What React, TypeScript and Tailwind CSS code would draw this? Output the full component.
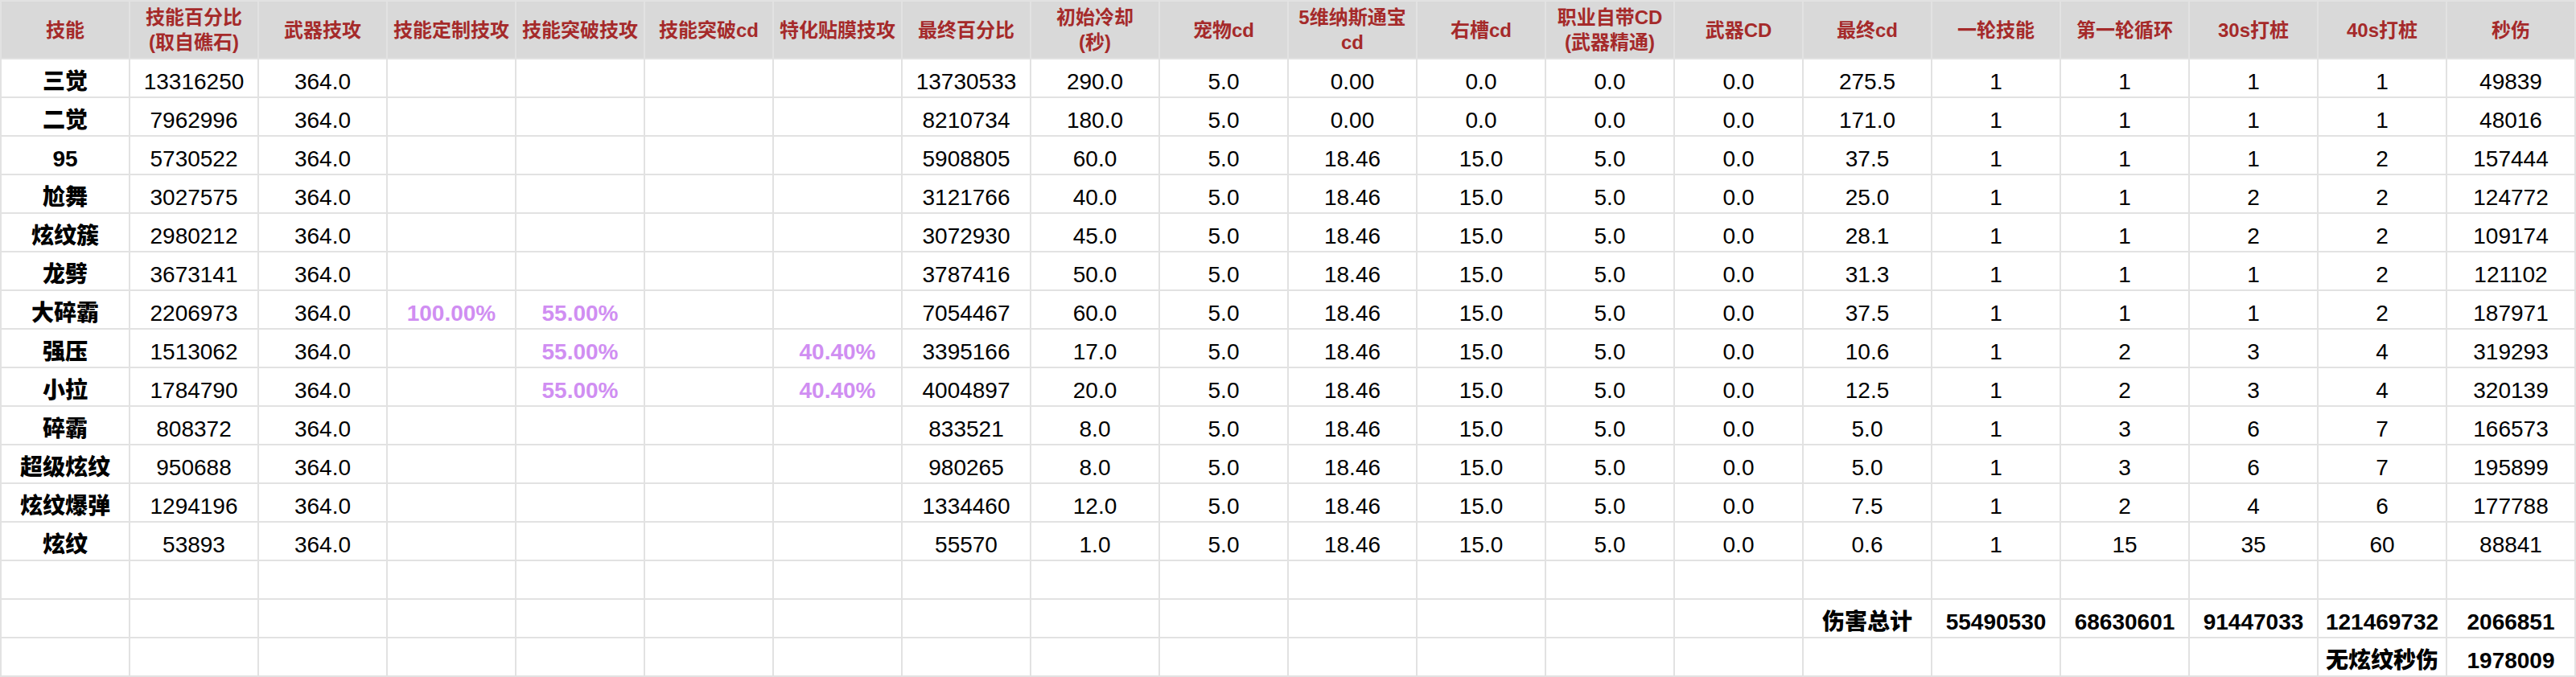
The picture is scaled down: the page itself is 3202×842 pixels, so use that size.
import React from "react";

const FONT = '"Liberation Sans", Arial, "Noto Sans CJK SC", sans-serif';

const headers: string[][] = [
  ["技能"],
  ["技能百分比", "(取自礁石)"],
  ["武器技攻"],
  ["技能定制技攻"],
  ["技能突破技攻"],
  ["技能突破cd"],
  ["特化贴膜技攻"],
  ["最终百分比"],
  ["初始冷却", "(秒)"],
  ["宠物cd"],
  ["5维纳斯通宝", "cd"],
  ["右槽cd"],
  ["职业自带CD", "(武器精通)"],
  ["武器CD"],
  ["最终cd"],
  ["一轮技能"],
  ["第一轮循环"],
  ["30s打桩"],
  ["40s打桩"],
  ["秒伤"],
];

type Row = string[];

const data: Row[] = [
  ["三觉", "13316250", "364.0", "", "", "", "", "13730533", "290.0", "5.0", "0.00", "0.0", "0.0", "0.0", "275.5", "1", "1", "1", "1", "49839"],
  ["二觉", "7962996", "364.0", "", "", "", "", "8210734", "180.0", "5.0", "0.00", "0.0", "0.0", "0.0", "171.0", "1", "1", "1", "1", "48016"],
  ["95", "5730522", "364.0", "", "", "", "", "5908805", "60.0", "5.0", "18.46", "15.0", "5.0", "0.0", "37.5", "1", "1", "1", "2", "157444"],
  ["尬舞", "3027575", "364.0", "", "", "", "", "3121766", "40.0", "5.0", "18.46", "15.0", "5.0", "0.0", "25.0", "1", "1", "2", "2", "124772"],
  ["炫纹簇", "2980212", "364.0", "", "", "", "", "3072930", "45.0", "5.0", "18.46", "15.0", "5.0", "0.0", "28.1", "1", "1", "2", "2", "109174"],
  ["龙劈", "3673141", "364.0", "", "", "", "", "3787416", "50.0", "5.0", "18.46", "15.0", "5.0", "0.0", "31.3", "1", "1", "1", "2", "121102"],
  ["大碎霸", "2206973", "364.0", "100.00%", "55.00%", "", "", "7054467", "60.0", "5.0", "18.46", "15.0", "5.0", "0.0", "37.5", "1", "1", "1", "2", "187971"],
  ["强压", "1513062", "364.0", "", "55.00%", "", "40.40%", "3395166", "17.0", "5.0", "18.46", "15.0", "5.0", "0.0", "10.6", "1", "2", "3", "4", "319293"],
  ["小拉", "1784790", "364.0", "", "55.00%", "", "40.40%", "4004897", "20.0", "5.0", "18.46", "15.0", "5.0", "0.0", "12.5", "1", "2", "3", "4", "320139"],
  ["碎霸", "808372", "364.0", "", "", "", "", "833521", "8.0", "5.0", "18.46", "15.0", "5.0", "0.0", "5.0", "1", "3", "6", "7", "166573"],
  ["超级炫纹", "950688", "364.0", "", "", "", "", "980265", "8.0", "5.0", "18.46", "15.0", "5.0", "0.0", "5.0", "1", "3", "6", "7", "195899"],
  ["炫纹爆弹", "1294196", "364.0", "", "", "", "", "1334460", "12.0", "5.0", "18.46", "15.0", "5.0", "0.0", "7.5", "1", "2", "4", "6", "177788"],
  ["炫纹", "53893", "364.0", "", "", "", "", "55570", "1.0", "5.0", "18.46", "15.0", "5.0", "0.0", "0.6", "1", "15", "35", "60", "88841"],
];

const emptyRow: Row = Array(20).fill("");
const totalRow: Row = [
  ...Array(14).fill(""),
  "伤害总计",
  "55490530",
  "68630601",
  "91447033",
  "121469732",
  "2066851",
];
const lastRow: Row = [...Array(18).fill(""), "无炫纹秒伤", "1978009"];

const isCjk = (s: string) => /[\u4e00-\u9fff]/.test(s);

function BodyCell({ value, col, bold }: { value: string; col: number; bold: boolean }) {
  const isPct = value.endsWith("%");
  let cls = "bg-white flex items-center justify-center pt-[10px] whitespace-nowrap text-[28px] leading-[32px] ";
  if (isPct) cls += "font-bold text-[#d08ef2]";
  else if (isCjk(value)) cls += "font-black text-black";
  else if (bold || col === 0) cls += "font-bold text-black";
  else cls += "font-normal text-black";
  return <div className={cls}>{value}</div>;
}

export default function App() {
  return (
    <div
      className="w-[3202px] h-[842px] bg-[#e2e2e2] p-[2px] grid grid-cols-[repeat(20,158px)] grid-rows-[70px_repeat(16,46px)] gap-[2px] overflow-hidden"
      style={{ fontFamily: FONT }}
    >
      {headers.map((h, i) => (
        <div
          key={`h${i}`}
          className="bg-[#d9d9d9] flex flex-col items-center justify-center text-[24px] leading-[31px] font-bold text-[#a52a2a] whitespace-nowrap"
        >
          {h.map((line, j) => (
            <span key={j}>{line}</span>
          ))}
        </div>
      ))}
      {data.map((row, r) =>
        row.map((v, c) => <BodyCell key={`r${r}c${c}`} value={v} col={c} bold={false} />)
      )}
      {emptyRow.map((v, c) => (
        <BodyCell key={`e${c}`} value={v} col={c} bold={false} />
      ))}
      {totalRow.map((v, c) => (
        <BodyCell key={`t${c}`} value={v} col={c} bold={true} />
      ))}
      {lastRow.map((v, c) => (
        <BodyCell key={`l${c}`} value={v} col={c} bold={true} />
      ))}
    </div>
  );
}
